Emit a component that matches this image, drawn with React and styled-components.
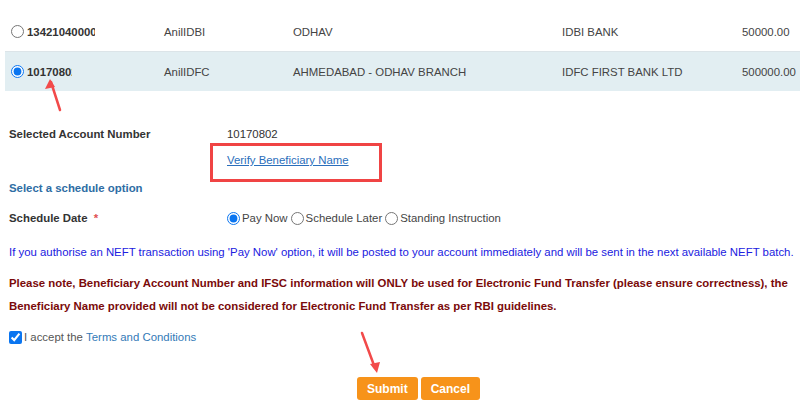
import styled, { createGlobalStyle } from "styled-components";

const GlobalStyle = createGlobalStyle`
  body {
    margin: 0;
    background: #fff;
    font-family: "Liberation Sans", Arial, sans-serif;
    font-size: 11.4px;
    color: #444;
  }
`;

const rows = [
  { acc: "13421040000", clip: 68, name: "AnilIDBI", branch: "ODHAV", bank: "IDBI BANK", amount: "50000.00" },
  { acc: "10170802", clip: 45, name: "AnilIDFC", branch: "AHMEDABAD - ODHAV BRANCH", bank: "IDFC FIRST BANK LTD", amount: "500000.00", selected: true },
];

export default function App() {
  return (
    <Page>
      <GlobalStyle />
      <Table>
        {rows.map((r) => (
          <Row key={r.acc} $active={r.selected}>
            <Cell>
              <Radio type="radio" name="ben" defaultChecked={r.selected} />
              <AccNo $w={r.clip}>{r.acc}</AccNo>
            </Cell>
            <Cell>{r.name}</Cell>
            <Cell>{r.branch}</Cell>
            <Cell>{r.bank}</Cell>
            <Cell>{r.amount}</Cell>
          </Row>
        ))}
      </Table>

      <Form>
        <FieldRow>
          <Label>Selected Account Number</Label>
          <Value>10170802</Value>
        </FieldRow>
        <FieldRow>
          <span />
          <LinkCell>
            <Link href="#">Verify Beneficiary Name</Link>
            <Highlight />
          </LinkCell>
        </FieldRow>
        <Heading>Select a schedule option</Heading>
        <FieldRow $h={30}>
          <Label>
            Schedule Date <Star>*</Star>
          </Label>
          <Options>
            <Option>
              <Radio type="radio" name="sched" defaultChecked />
              Pay Now
            </Option>
            <Option>
              <Radio type="radio" name="sched" />
              Schedule Later
            </Option>
            <Option>
              <Radio type="radio" name="sched" />
              Standing Instruction
            </Option>
          </Options>
        </FieldRow>
        <Info>
          If you authorise an NEFT transaction using 'Pay Now' option, it will be posted to your account
          immediately and will be sent in the next available NEFT batch.
        </Info>
        <Warning>
          Please note, Beneficiary Account Number and IFSC information will ONLY be used for Electronic Fund
          Transfer (please ensure correctness), the Beneficiary Name provided will not be considered for
          Electronic Fund Transfer as per RBI guidelines.
        </Warning>
        <Accept>
          <Check type="checkbox" defaultChecked />
          I accept the <TermsLink href="#">Terms and Conditions</TermsLink>
        </Accept>
        <Buttons>
          <Button>Submit</Button>
          <Button>Cancel</Button>
        </Buttons>
      </Form>

      {/* annotation arrows */}
      <Arrow width="30" height="40" style={{ left: 40, top: 76 }} viewBox="0 0 30 40">
        <line x1="20" y1="34" x2="11" y2="6" stroke="#f24a4a" strokeWidth="2.5" strokeLinecap="round" />
        <path d="M10 3 L5 13 L15 11 Z" fill="#f24a4a" />
      </Arrow>
      <Arrow width="30" height="50" style={{ left: 355, top: 328 }} viewBox="0 0 30 50">
        <line x1="7" y1="5" x2="20" y2="40" stroke="#f24a4a" strokeWidth="2.5" strokeLinecap="round" />
        <path d="M22 45 L15 36 L25 34 Z" fill="#f24a4a" />
      </Arrow>
    </Page>
  );
}

const Page = styled.div`
  position: relative;
  width: 800px;
  height: 406px;
  overflow: hidden;
`;

const Table = styled.div`
  margin: 12px 0 0 5px;
`;

const Row = styled.div`
  display: grid;
  grid-template-columns: 159px 129px 269px 180px 1fr;
  align-items: center;
  height: 39px;
  background: ${(p) => (p.$active ? "#e2eef2" : "#fff")};
  border-top: ${(p) => (p.$active ? "1px solid #dce4e8" : "none")};
  color: #444;
`;

const Cell = styled.div`
  display: flex;
  align-items: center;
  white-space: nowrap;
  &:first-child {
    padding-left: 6px;
  }
`;

const Radio = styled.input`
  width: 13px;
  height: 13px;
  margin: 0 2px 0 0;
  accent-color: #0a75f0;
`;

const AccNo = styled.span`
  display: inline-block;
  width: ${(p) => p.$w}px;
  overflow: hidden;
  font-weight: bold;
  color: #333;
  margin-left: 1px;
`;

const Form = styled.div`
  padding: 30px 9px 0;
`;

const FieldRow = styled.div`
  display: grid;
  grid-template-columns: 218px 1fr;
  align-items: center;
  height: ${(p) => p.$h || 26}px;
`;

const Label = styled.span`
  font-weight: bold;
  color: #333;
`;

const Star = styled.span`
  color: #e05050;
  margin-left: 3px;
`;

const Value = styled.span`
  color: #333;
`;

const LinkCell = styled.div`
  position: relative;
`;

const Link = styled.a`
  color: #2a6ebb;
  text-decoration: underline;
`;

const Highlight = styled.div`
  position: absolute;
  left: -17px;
  top: -11px;
  width: 166px;
  height: 33px;
  border: 3px solid #f04444;
`;

const Heading = styled.div`
  height: 30px;
  line-height: 30px;
  font-weight: bold;
  color: #2e6da4;
`;

const Options = styled.div`
  display: flex;
  align-items: center;
`;

const Option = styled.label`
  display: flex;
  align-items: center;
  margin-right: 3px;
  color: #444;
`;

const Info = styled.p`
  margin: 10px 0 0;
  line-height: 18px;
  color: #2020e0;
  white-space: nowrap;
`;

const Warning = styled.p`
  margin: 11px 0 0;
  line-height: 23px;
  font-weight: bold;
  color: #7a0a0a;
`;

const Accept = styled.label`
  display: flex;
  align-items: center;
  height: 20px;
  margin-top: 9px;
  color: #555;
  white-space: pre;
`;

const Check = styled.input`
  width: 13px;
  height: 13px;
  margin: 0 2px 0 0;
  accent-color: #0a75f0;
`;

const TermsLink = styled.a`
  color: #337ab7;
  text-decoration: none;
`;

const Buttons = styled.div`
  display: flex;
  gap: 3px;
  margin-top: 30px;
  padding-left: 348px;
`;

const Button = styled.button`
  height: 23px;
  padding: 0 10px;
  border: none;
  border-radius: 3px;
  background: #f7931a;
  color: #fff;
  font-family: "Liberation Sans", Arial, sans-serif;
  font-size: 12px;
  font-weight: bold;
`;

const Arrow = styled.svg`
  position: absolute;
`;
